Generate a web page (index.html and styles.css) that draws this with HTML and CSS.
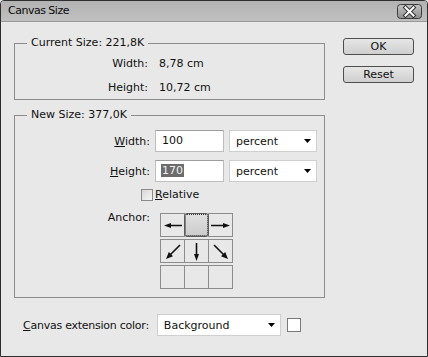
FILE: index.html
```html
<!DOCTYPE html>
<html>
<head>
<meta charset="utf-8">
<link rel="stylesheet" href="styles.css">
</head>
<body>
<div class="window">
  <div class="titlebar">
    <span class="title">Canvas Size</span>
    <svg class="close" width="25" height="15" viewBox="0 0 25 15">
      <defs>
        <linearGradient id="cg" x1="0" y1="0" x2="0" y2="1">
          <stop offset="0" stop-color="#c4c4c4"/>
          <stop offset="1" stop-color="#8e8e8e"/>
        </linearGradient>
      </defs>
      <rect x="0.5" y="0.5" width="24" height="14" rx="3" fill="url(#cg)" stroke="#3c3c3c"/>
      <path d="M8.5 3.5 L16.5 11.5 M16.5 3.5 L8.5 11.5" stroke="#333" stroke-width="4" stroke-linecap="square"/>
      <path d="M8.5 3.5 L16.5 11.5 M16.5 3.5 L8.5 11.5" stroke="#fff" stroke-width="2" stroke-linecap="square"/>
    </svg>
  </div>
  <div class="content">
    <div class="main">
      <fieldset class="group current">
        <legend>Current Size: 221,8K</legend>
        <div class="info">
          <span class="lbl">Width:</span><span class="val">8,78 cm</span>
          <span class="lbl">Height:</span><span class="val">10,72 cm</span>
        </div>
      </fieldset>
      <fieldset class="group newsize">
        <legend>New Size: 377,0K</legend>
        <div class="form">
          <span class="lbl"><u>W</u>idth:</span>
          <div class="ctrls">
            <div class="input">100</div>
            <div class="select small"><span>percent</span><svg width="7" height="4" viewBox="0 0 7 4"><path d="M0 0H7L3.5 4Z" fill="#000"/></svg></div>
          </div>
          <span class="lbl"><u>H</u>eight:</span>
          <div class="ctrls">
            <div class="input"><span class="sel">170</span></div>
            <div class="select small"><span>percent</span><svg width="7" height="4" viewBox="0 0 7 4"><path d="M0 0H7L3.5 4Z" fill="#000"/></svg></div>
          </div>
          <div class="relative"><span class="check"></span><span><u>R</u>elative</span></div>
          <span class="lbl anchor-lbl">Anchor:</span>
          <div class="anchor">
            <div class="cell"><svg width="23" height="23" viewBox="0 0 23 23"><path d="M8 11.5H21" stroke="#111" stroke-width="1.6"/><path d="M3 11.5L10 9V14Z" fill="#111"/></svg></div>
            <div class="cell active"></div>
            <div class="cell"><svg width="23" height="23" viewBox="0 0 23 23"><path d="M2 11.5H15" stroke="#111" stroke-width="1.6"/><path d="M21 11.5L14 9V14Z" fill="#111"/></svg></div>
            <div class="cell"><svg width="23" height="23" viewBox="0 0 23 23"><path d="M19 5L9 15" stroke="#111" stroke-width="1.6"/><path d="M5 19L7.8 12L12 16.2Z" fill="#111"/></svg></div>
            <div class="cell"><svg width="23" height="23" viewBox="0 0 23 23"><path d="M11.5 3V15" stroke="#111" stroke-width="1.6"/><path d="M11.5 21L9 14H14Z" fill="#111"/></svg></div>
            <div class="cell"><svg width="23" height="23" viewBox="0 0 23 23"><path d="M5 5L15 15" stroke="#111" stroke-width="1.6"/><path d="M19 19L12 16.2L16.2 12Z" fill="#111"/></svg></div>
            <div class="cell"></div>
            <div class="cell"></div>
            <div class="cell"></div>
          </div>
        </div>
      </fieldset>
    </div>
    <div class="buttons">
      <div class="btn">OK</div>
      <div class="btn">Reset</div>
    </div>
  </div>
  <div class="bottom">
    <span class="ext-lbl"><u>C</u>anvas extension color:</span>
    <div class="select wide"><span>Background</span><svg width="7" height="4" viewBox="0 0 7 4"><path d="M0 0H7L3.5 4Z" fill="#000"/></svg></div>
    <div class="swatch"></div>
  </div>
</div>
</body>
</html>
```

FILE: styles.css
```css
* { box-sizing: border-box; }
html, body { margin: 0; padding: 0; }
body {
  width: 428px;
  height: 357px;
  font-family: "DejaVu Sans", sans-serif;
  font-size: 11px;
  color: #111;
  background: #e8e8e8;
}
u { text-decoration: underline; text-underline-offset: 1px; }
.window {
  width: 428px;
  height: 357px;
  border: 1px solid #2e2e2e;
  border-radius: 4px 4px 0 0;
  background: #e8e8e8;
  display: flex;
  flex-direction: column;
  overflow: hidden;
}
.titlebar {
  height: 21px;
  flex: none;
  display: flex;
  align-items: center;
  justify-content: space-between;
  padding: 0 5px 1px 7px;
  background: linear-gradient(#b2b2b2, #c0c0c0);
  border-bottom: 1px solid #9a9a9a;
  font-size: 11px;
  letter-spacing: -0.5px;
  color: #0a0a0a;
}
.close { display: block; margin-top: 1px; }
.content {
  display: flex;
  padding: 14px 0 0 13px;
}
.main { width: 311px; display: flex; flex-direction: column; }
.group {
  margin: 0;
  padding: 0;
  border: 1px solid #8c8c8c;
  min-width: 0;
}
.group legend {
  margin-left: 12px;
  padding: 0 4px;
  line-height: 14px;
}
.current { padding: 6px 0 3px; }
.info {
  display: grid;
  grid-template-columns: 133px auto;
  column-gap: 11px;
  row-gap: 8px;
  line-height: 16px;
}
.info .lbl, .form .lbl { text-align: right; }
.newsize { margin-top: 8px; padding: 8px 0 8px; }
.form {
  display: grid;
  grid-template-columns: 135px auto;
  column-gap: 5px;
  row-gap: 8px;
  align-items: center;
}
.ctrls { display: flex; gap: 5px; }
.input {
  width: 69px;
  height: 22px;
  background: #fff;
  border: 1px solid #bdbdbd;
  border-top-color: #9e9e9e;
  padding-left: 6px;
  line-height: 20px;
}
.sel { background: #6c6c6c; color: #f0f0f0; padding: 0 1px; margin-left: -1px; }
.select {
  height: 22px;
  background: #fff;
  border: 1px solid #cfcfcf;
  display: flex;
  align-items: center;
  justify-content: space-between;
  padding: 0 5px 0 6px;
}
.select.small { width: 88px; }
.select.wide { width: 124px; }
.relative {
  grid-column: 2;
  display: flex;
  align-items: center;
  gap: 2px;
  margin-left: -14px;
  margin-top: -3px;
  line-height: 16px;
}
.check {
  width: 12px;
  height: 12px;
  border: 1px solid #8a8a8a;
  background: linear-gradient(135deg, #d8d8d8, #f6f6f6);
}
.anchor-lbl { align-self: start; margin-top: -1px; line-height: 16px; }
.anchor {
  margin-left: 5px;
  display: grid;
  grid-template-columns: repeat(3, 24px);
  grid-template-rows: repeat(3, 24px);
  row-gap: 2px;
  width: max-content;
  margin-top: 2px;
}
.cell {
  border: 1px solid #8c8c8c;
  margin-right: -1px;
  display: flex;
  align-items: center;
  justify-content: center;
}
.cell svg { display: block; }
.cell.active {
  border-color: #5a5a5a;
  border-radius: 3px;
  background: linear-gradient(#e0e0e0, #cbcbcb);
  outline: 1px dotted #333;
  outline-offset: -2px;
  position: relative;
  z-index: 1;
}
.buttons {
  display: flex;
  flex-direction: column;
  gap: 11px;
  margin: 2px 0 0 18px;
}
.btn {
  width: 71px;
  height: 17px;
  border: 1px solid #4e4e4e;
  border-radius: 3px;
  background: linear-gradient(#e6e6e6, #cfcfcf);
  text-align: center;
  line-height: 15px;
}
.bottom {
  display: flex;
  align-items: center;
  padding: 16px 0 0 22px;
}
.ext-lbl { letter-spacing: -0.25px; }
.bottom .select { margin-left: 8px; }
.swatch {
  width: 14px;
  height: 14px;
  margin-left: 6px;
  background: #fff;
  border: 1px solid #7a7a7a;
}
```
